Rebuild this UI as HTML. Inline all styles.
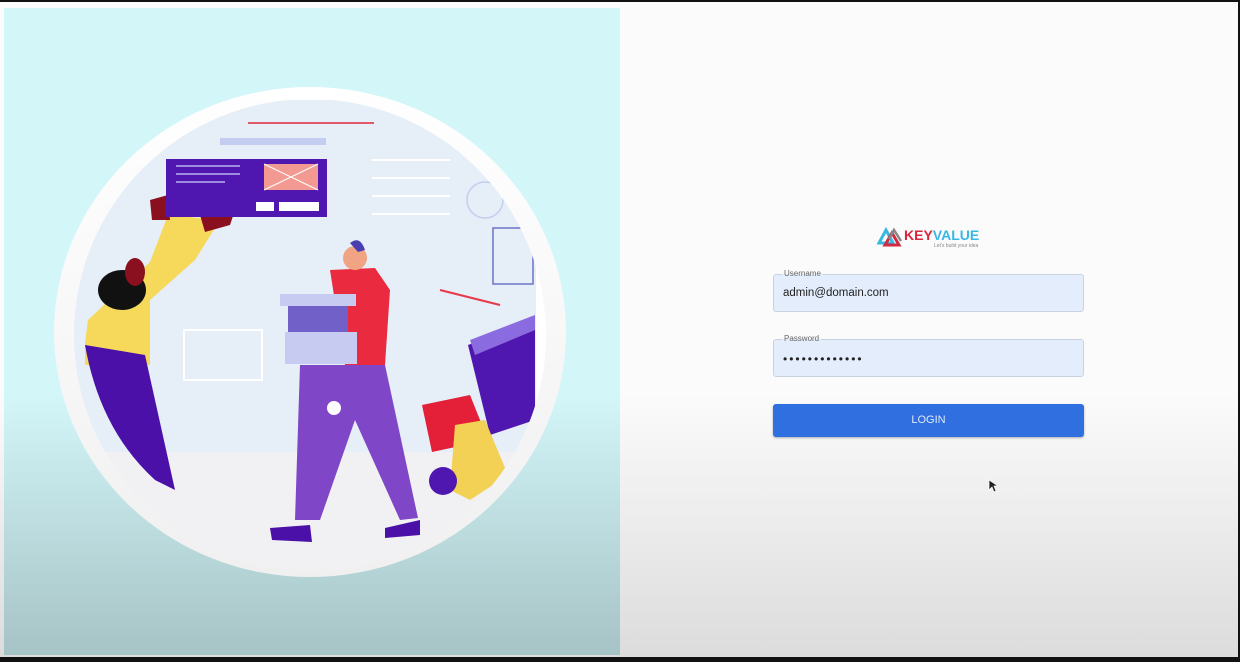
<!DOCTYPE html>
<html><head><meta charset="utf-8"><style>
*{margin:0;padding:0;box-sizing:border-box}
body{width:1240px;height:662px;overflow:hidden;background:#111;font-family:"Liberation Sans",sans-serif;position:relative}
.right{position:absolute;left:0;top:2px;width:1238px;height:655px;background:linear-gradient(#fbfbfb 0,#fbfbfb 60%,#dcdcdc 100%)}
.left{position:absolute;left:4px;top:8px;width:616px;height:647px;background:linear-gradient(#d3f6f9 0,#d3f6f9 60%,#a6c3c5 100%)}
.field{position:absolute;left:773px;width:311px;height:38px;background:#e3edfb;border:1px solid #c9d3df;border-radius:3px;font-size:11.5px;color:#222;padding:12px 9px}
.lab{position:absolute;font-size:8px;color:#666;left:782px;background:linear-gradient(transparent 50%,#e3edfb 50%);padding:0 2px}
.btn{position:absolute;left:773px;top:404px;width:311px;height:33px;background:#2f6fe0;border-radius:3px;color:#dfe8f9;font-size:11px;text-align:center;line-height:33px;box-shadow:0 1px 2px rgba(0,0,0,.3)}
</style></head><body>
<div class="right"></div>
<div class="left"></div>
<svg style="position:absolute;left:0;top:0" width="640" height="662">
<defs><clipPath id="c"><circle cx="310" cy="335" r="236"/></clipPath>
<linearGradient id="w" x1="0" y1="0" x2="0" y2="1"><stop offset="0" stop-color="#fff"/><stop offset="1" stop-color="#f0f0f0"/></linearGradient></defs>
<ellipse cx="310" cy="332" rx="256" ry="245" fill="url(#w)"/>
<g clip-path="url(#c)">
<rect x="60" y="100" width="476" height="352" fill="#e6eef8"/>
<rect x="60" y="452" width="476" height="120" fill="#f1f1f3"/>
<rect x="536" y="90" width="40" height="500" fill="#fff"/>
<rect x="248" y="122" width="126" height="2" fill="#e05a6a"/>
<rect x="220" y="138" width="106" height="7" fill="#c4ccf0"/>
<g stroke="#fff" stroke-width="2"><line x1="372" y1="160" x2="450" y2="160"/><line x1="372" y1="178" x2="450" y2="178"/><line x1="372" y1="196" x2="450" y2="196"/><line x1="372" y1="214" x2="450" y2="214"/></g>
<circle cx="485" cy="200" r="18" fill="none" stroke="#c4ccf0" stroke-width="1.5"/>
<rect x="493" y="228" width="40" height="56" fill="none" stroke="#6b72c8" stroke-width="1.5"/>
<rect x="184" y="330" width="78" height="50" fill="none" stroke="#fff" stroke-width="2"/>
<path d="M85 343 L88 320 L150 262 L168 215 L220 220 L195 260 L150 300 L150 365 L85 365Z" fill="#f6d95a"/>
<path d="M85 345 L145 355 L175 490 L155 480 Q100 430 85 345Z" fill="#4a10a8"/>
<ellipse cx="122" cy="290" rx="24" ry="20" fill="#111"/>
<ellipse cx="135" cy="272" rx="10" ry="14" fill="#8a1020"/>
<path d="M150 200 L168 195 L170 220 L152 220Z" fill="#8a1020"/>
<path d="M200 215 L235 210 L230 225 L205 232Z" fill="#8a1020"/>
<rect x="166" y="159" width="161" height="58" fill="#4f17b0"/>
<g stroke="#b9b0f0" stroke-width="1.5"><line x1="176" y1="166" x2="240" y2="166"/><line x1="176" y1="174" x2="240" y2="174"/><line x1="176" y1="182" x2="225" y2="182"/></g>
<rect x="264" y="164" width="54" height="26" fill="#f29a92"/>
<path d="M264 164 L318 190 M318 164 L264 190" stroke="#fff" stroke-width="1"/>
<rect x="256" y="202" width="18" height="9" fill="#fff"/><rect x="279" y="202" width="40" height="9" fill="#fff"/>
<path d="M330 270 L375 268 L390 290 L385 365 L345 365 Z" fill="#ea2a3e"/>
<circle cx="355" cy="258" r="12" fill="#f1a484"/>
<path d="M350 243 Q360 235 365 250 L358 252Z" fill="#4a3fb0"/>
<rect x="280" y="294" width="76" height="12" fill="#c7cbf2"/>
<rect x="288" y="306" width="60" height="26" fill="#7060c8"/>
<rect x="285" y="332" width="72" height="32" fill="#c7cbf2"/>
<path d="M300 365 L385 365 L418 518 L400 520 L355 420 L320 520 L295 520Z" fill="#7f46c8"/>
<circle cx="334" cy="408" r="7" fill="#fff"/>
<path d="M270 528 L310 525 L312 542 L272 540Z" fill="#4a10a8"/>
<path d="M385 528 L420 520 L420 535 L385 538Z" fill="#4a10a8"/>
<path d="M468 345 L535 320 L535 420 L490 435Z" fill="#4f17b0"/>
<path d="M470 340 L535 315 L535 330 L475 355Z" fill="#8b6ce0"/>
<path d="M422 405 L470 395 L488 440 L432 452Z" fill="#e42038"/>
<path d="M455 425 L485 420 L508 475 L470 500 L450 490Z" fill="#f2d154"/>
<circle cx="443" cy="481" r="14" fill="#4f17b0"/>
<line x1="440" y1="290" x2="500" y2="305" stroke="#e8384a" stroke-width="2"/>
</g>
</svg>
<svg style="position:absolute;left:877px;top:225px" width="26" height="22"><path d="M2 18 L9 5 L16 18Z" fill="none" stroke="#36b8e0" stroke-width="3"/><path d="M8 20 L15 8 L22 20Z" fill="none" stroke="#d22a42" stroke-width="3"/><path d="M12 14 L17 5 L24 16" fill="none" stroke="#888" stroke-width="2.5"/></svg>
<div style="position:absolute;left:904px;top:227px;font-size:14px;font-weight:bold"><span style="color:#d7263d">KEY</span><span style="color:#39b8e6">VALUE</span></div>
<div style="position:absolute;left:934px;top:243px;font-size:5px;color:#888">Let's build your idea</div>
<div class="field" style="top:274px">admin@domain.com</div>
<div class="lab" style="top:269px">Username</div>
<div class="field" style="top:339px;letter-spacing:2px;font-size:12px">•••••••••••••</div>
<div class="lab" style="top:334px">Password</div>
<div class="btn">LOGIN</div>
<svg style="position:absolute;left:988px;top:479px" width="10" height="14"><path d="M1 1 L1 11 L4 8 L6 13 L8 12 L6 7 L10 7Z" fill="#222" stroke="#fff" stroke-width=".7"/></svg>
</body></html>
